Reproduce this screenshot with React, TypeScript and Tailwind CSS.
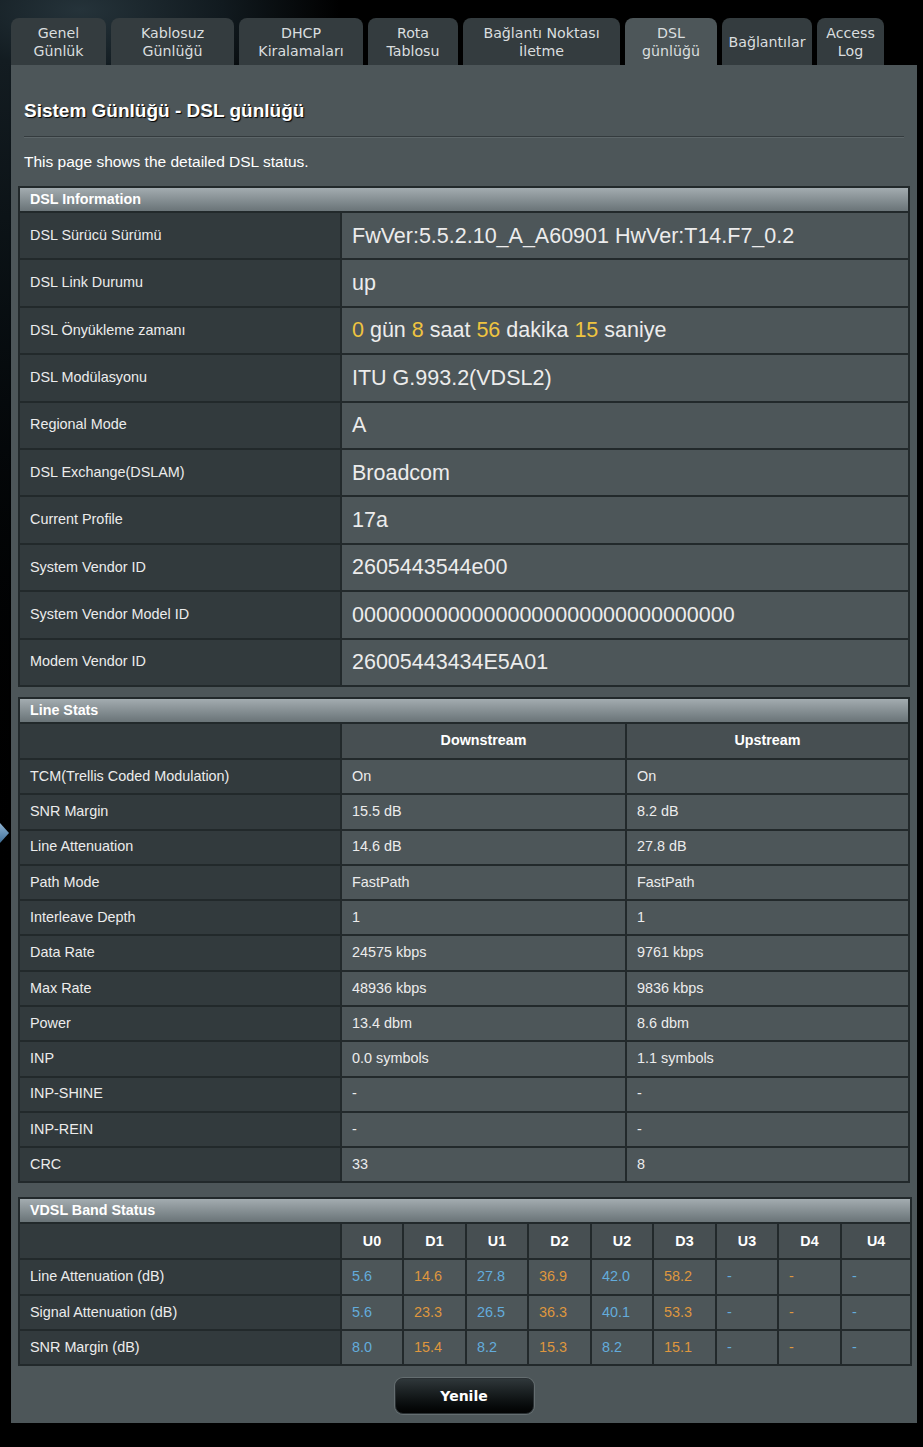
import React from "react";

type Tab = { lines: string[]; w: string; active?: boolean };

const tabs: Tab[] = [
  { lines: ["Genel", "Günlük"], w: "w-[95px]" },
  { lines: ["Kablosuz", "Günlüğü"], w: "w-[123px]" },
  { lines: ["DHCP", "Kiralamaları"], w: "w-[124px]" },
  { lines: ["Rota", "Tablosu"], w: "w-[90px]" },
  { lines: ["Bağlantı Noktası", "İletme"], w: "w-[157px]" },
  { lines: ["DSL", "günlüğü"], w: "w-[92px]", active: true },
  { lines: ["Bağlantılar"], w: "w-[90px]" },
  { lines: ["Access", "Log"], w: "w-[67px]" },
];

const dslInfo: [string, React.ReactNode][] = [
  ["DSL Sürücü Sürümü", "FwVer:5.5.2.10_A_A60901 HwVer:T14.F7_0.2"],
  ["DSL Link Durumu", "up"],
  [
    "DSL Önyükleme zamanı",
    <>
      <span className="text-[#efc440]">0</span> gün <span className="text-[#efc440]">8</span> saat{" "}
      <span className="text-[#efc440]">56</span> dakika <span className="text-[#efc440]">15</span> saniye
    </>,
  ],
  ["DSL Modülasyonu", "ITU G.993.2(VDSL2)"],
  ["Regional Mode", "A"],
  ["DSL Exchange(DSLAM)", "Broadcom"],
  ["Current Profile", "17a"],
  ["System Vendor ID", "2605443544e00"],
  ["System Vendor Model ID", "00000000000000000000000000000000"],
  ["Modem Vendor ID", "26005443434E5A01"],
];

const lineStats: [string, string, string][] = [
  ["TCM(Trellis Coded Modulation)", "On", "On"],
  ["SNR Margin", "15.5 dB", "8.2 dB"],
  ["Line Attenuation", "14.6 dB", "27.8 dB"],
  ["Path Mode", "FastPath", "FastPath"],
  ["Interleave Depth", "1", "1"],
  ["Data Rate", "24575 kbps", "9761 kbps"],
  ["Max Rate", "48936 kbps", "9836 kbps"],
  ["Power", "13.4 dbm", "8.6 dbm"],
  ["INP", "0.0 symbols", "1.1 symbols"],
  ["INP-SHINE", "-", "-"],
  ["INP-REIN", "-", "-"],
  ["CRC", "33", "8"],
];

const bands = ["U0", "D1", "U1", "D2", "U2", "D3", "U3", "D4", "U4"];
const bandWidths = ["w-[62px]", "w-[63px]", "w-[62px]", "w-[63px]", "w-[62px]", "w-[63px]", "w-[62px]", "w-[63px]", "w-[70px]"];
const bandRows: [string, string[]][] = [
  ["Line Attenuation (dB)", ["5.6", "14.6", "27.8", "36.9", "42.0", "58.2", "-", "-", "-"]],
  ["Signal Attenuation (dB)", ["5.6", "23.3", "26.5", "36.3", "40.1", "53.3", "-", "-", "-"]],
  ["SNR Margin (dB)", ["8.0", "15.4", "8.2", "15.3", "8.2", "15.1", "-", "-", "-"]],
];

const sans = "font-['Liberation_Sans',Arial,sans-serif]";

function SectionHeader({ title, span }: { title: string; span: number }) {
  return (
    <tr>
      <th
        colSpan={span}
        className="h-[25px] border-2 border-[#22292b] bg-gradient-to-b from-[#a3acb0] to-[#6a7478] pl-[10px] text-left text-[14.3px] font-bold text-white"
      >
        {title}
      </th>
    </tr>
  );
}

const labelCell = "border-2 border-[#22292b] bg-[#323a3d] pl-[10px] text-left text-[14.4px] font-normal text-[#ececec]";
const valueBase = "border-2 border-[#22292b] bg-[#4d5659] pl-[10px] text-left";
const headCell = "border-2 border-[#22292b] bg-[#474f52] text-center text-[14.3px] font-bold text-white";

export default function App() {
  return (
    <div className="relative min-h-[1447px] w-[923px] overflow-hidden bg-black bg-[radial-gradient(ellipse_260px_120px_at_80px_10px,#25333a_0%,#111a1f_55%,#000_100%)]">
      {/* faint strip left of the panel */}
      <div className="absolute left-0 top-[60px] h-[900px] w-[11px] bg-gradient-to-b from-[#131c21] to-black" />
      {/* side pointer */}
      <svg className="absolute left-0 top-[822px]" width="10" height="22" viewBox="0 0 10 22">
        <defs>
          <linearGradient id="ptr" x1="0" y1="0" x2="0" y2="1">
            <stop offset="0" stopColor="#8fb4d4" />
            <stop offset="1" stopColor="#3f6f98" />
          </linearGradient>
        </defs>
        <path d="M0 1 L9 11 L0 21 Z" fill="url(#ptr)" />
      </svg>

      <div className="relative pl-[11px] pt-[18px]">
        {/* tabs */}
        <div className="flex gap-[5px]">
          {tabs.map((t) => (
            <div
              key={t.lines.join(" ")}
              className={`${t.w} flex h-[47px] flex-col items-center justify-center rounded-t-[8px] font-['DejaVu_Sans',Verdana,sans-serif] text-[14.2px] leading-[18px] text-[#dadedf] ${
                t.active ? "bg-[#4d5659]" : "bg-[#343c3f]"
              }`}
            >
              {t.lines.map((l) => (
                <span key={l} className="whitespace-nowrap">
                  {l}
                </span>
              ))}
            </div>
          ))}
        </div>

        {/* panel */}
        <div className={`${sans} w-[906px] bg-[#4d5659] px-[7px] pb-[9px] pt-[35px] shadow-[2px_2px_3px_rgba(0,0,0,0.6)]`}>
          <h1 className="pl-[6px] text-[19px] font-bold leading-[21px] text-white [text-shadow:1px_1px_1px_#000]">
            Sistem Günlüğü - DSL günlüğü
          </h1>
          <div className="mx-[6px] mt-[15px] h-[2px] border-t border-[#343b3e] bg-[#5d6669]" />
          <p className="mt-[15px] pl-[6px] text-[15.5px] leading-[17px] text-white">This page shows the detailed DSL status.</p>

          {/* DSL Information */}
          <table className="mt-[16px] w-[892px] table-fixed border-collapse">
            <colgroup>
              <col className="w-[322px]" />
              <col />
            </colgroup>
            <thead>
              <SectionHeader title="DSL Information" span={2} />
            </thead>
            <tbody>
              {dslInfo.map(([k, v]) => (
                <tr key={k} className="h-[47.4px]">
                  <th className={labelCell}>{k}</th>
                  <td className={`${valueBase} text-[21.5px] text-[#ececec]`}>{v}</td>
                </tr>
              ))}
            </tbody>
          </table>

          {/* Line Stats */}
          <table className="mt-[10px] w-[892px] table-fixed border-collapse">
            <colgroup>
              <col className="w-[322px]" />
              <col className="w-[285px]" />
              <col />
            </colgroup>
            <thead>
              <SectionHeader title="Line Stats" span={3} />
              <tr className="h-[36px]">
                <th className={labelCell} />
                <th className={headCell}>Downstream</th>
                <th className={headCell}>Upstream</th>
              </tr>
            </thead>
            <tbody>
              {lineStats.map(([k, d, u]) => (
                <tr key={k} className="h-[35.3px]">
                  <th className={labelCell}>{k}</th>
                  <td className={`${valueBase} text-[14.4px] text-[#ececec]`}>{d}</td>
                  <td className={`${valueBase} text-[14.4px] text-[#ececec]`}>{u}</td>
                </tr>
              ))}
            </tbody>
          </table>

          {/* VDSL Band Status */}
          <table className="mt-[14px] w-[892px] table-fixed border-collapse">
            <colgroup>
              <col className="w-[322px]" />
              {bandWidths.map((w, i) => (
                <col key={i} className={w} />
              ))}
            </colgroup>
            <thead>
              <SectionHeader title="VDSL Band Status" span={10} />
              <tr className="h-[36px]">
                <th className={labelCell} />
                {bands.map((b) => (
                  <th key={b} className={headCell}>
                    {b}
                  </th>
                ))}
              </tr>
            </thead>
            <tbody>
              {bandRows.map(([k, vals]) => (
                <tr key={k} className="h-[35.3px]">
                  <th className={labelCell}>{k}</th>
                  {vals.map((v, i) => (
                    <td
                      key={i}
                      className={`${valueBase} text-[14.4px] ${i % 2 === 0 ? "text-[#63acdc]" : "text-[#df973e]"}`}
                    >
                      {v}
                    </td>
                  ))}
                </tr>
              ))}
            </tbody>
          </table>

          <div className="mt-[12px] flex justify-center">
            <button className="h-[36px] w-[139px] rounded-[8px] border border-[#2a3033] bg-gradient-to-b from-[#2f373a] to-[#020303] font-['DejaVu_Sans',Verdana,sans-serif] text-[14px] font-bold text-white shadow-[0_0_0_1px_#646d70]">
              Yenile
            </button>
          </div>
        </div>
      </div>
    </div>
  );
}
